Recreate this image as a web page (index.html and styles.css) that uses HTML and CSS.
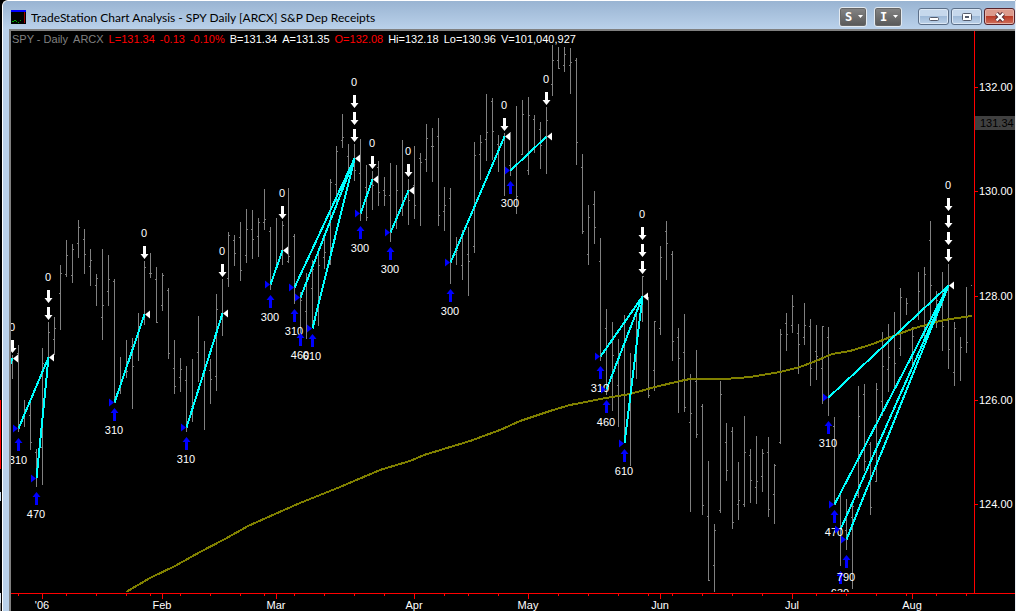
FILE: index.html
```html
<!DOCTYPE html>
<html lang="en">
<head>
<meta charset="utf-8">
<title>TradeStation Chart Analysis</title>
<link rel="stylesheet" href="styles.css">
</head>
<body>
<div class="edge" aria-hidden="true"></div>
<main class="window">
  <header class="titlebar">
    <svg class="app-icon" width="15" height="14" viewBox="0 0 15 14" aria-hidden="true">
      <rect width="15" height="14" fill="#000"/>
      <rect width="15" height="2" fill="#00f"/>
      <rect x="13" y="2" width="1" height="11" fill="#a00000"/>
      <path d="M1 11.500h2M3 10.500h2M5 11.500h1M7 12.500h1M9 10.500h1" stroke="#0a0" fill="none"/>
    </svg>
    <h1 class="title">TradeStation Chart Analysis - SPY Daily [ARCX] S&amp;P Dep Receipts</h1>
    <div class="tools">
      <button class="tool" type="button" aria-label="Symbol menu">S<svg width="7" height="4" viewBox="0 0 7 4"><path d="M1 0h5L3.500 3z" fill="#fff"/></svg></button>
      <button class="tool" type="button" aria-label="Interval menu">I<svg width="7" height="4" viewBox="0 0 7 4"><path d="M1 0h5L3.500 3z" fill="#fff"/></svg></button>
    </div>
    <div class="controls">
      <button class="control" type="button" aria-label="Minimize"><svg width="12" height="10" viewBox="0 0 12 10"><rect x="1.500" y="5.500" width="9" height="3" rx="1" fill="#fff" stroke="#555b6b"/></svg></button>
      <button class="control" type="button" aria-label="Maximize"><svg width="12" height="10" viewBox="0 0 12 10"><rect x="1.500" y="1.500" width="9" height="7" rx="1" fill="#fff" stroke="#555b6b"/><rect x="4.500" y="4.500" width="3" height="1" fill="#a9c3df" stroke="#555b6b"/></svg></button>
      <button class="control close" type="button" aria-label="Close"><svg width="12" height="10" viewBox="0 0 12 10"><path d="M2.500 1.500L9.500 8.500M9.500 1.500L2.500 8.500" stroke="#59323a" stroke-width="4.400"/><path d="M2.500 1.500L9.500 8.500M9.500 1.500L2.500 8.500" stroke="#fff" stroke-width="2.400"/></svg></button>
    </div>
  </header>
  <section class="chart">
    <div class="quote">
      <span class="dim">SPY - Daily</span><span class="dim">ARCX</span>
      <span class="down">L=131.34</span><span class="down">-0.13</span><span class="down">-0.10%</span>
      <span>B=131.34</span><span>A=131.35</span><span class="down">O=132.08</span>
      <span>Hi=132.18</span><span>Lo=130.96</span><span>V=101,040,927</span>
    </div>
    <svg class="plot" viewBox="11 45 1004 566" preserveAspectRatio="xMinYMin meet" role="img" aria-label="SPY daily price bars with trades">
      <defs><clipPath id="pane"><rect x="11" y="45" width="963" height="547"/></clipPath></defs>
      <g clip-path="url(#pane)">
        <path id="bars" class="bars"/>
        <polyline class="average" points="126,592 150,578 175,566 200,552 225,539 248,526 275,514 300,503 340,487 380,470 410,461 424,455 470,441 500,430 520,421 550,411 570,405 606,398 630,394 655,387 680,381 690,379 725,379 750,377 780,372 800,367 816,361 832,354 850,351 870,345 893,336 915,328 940,321 950,319 972,316"/>
        <g id="trades"></g>
      </g>
      <path id="axis" class="axis"/>
      <g id="scale"></g>
    </svg>
  </section>
</main>
<script src="chart.js"></script>
</body>
</html>
```

FILE: styles.css
```css
* { box-sizing: border-box; }

body {
  display: flex;
  min-height: 100vh;
  margin: 0;
  background: #000;
  font-family: "Liberation Sans", Arial, sans-serif;
  font-size: 11px;
  color: #fff;
}

.edge {
  width: 2px;
  background: linear-gradient(#000 400px, #f00 400px 469px, #000 469px 492px, #c8dcf0 492px 501px, #000 501px 593px, #dde6f0 593px 603px, #888 603px);
  clip-path: inset(0 1px 0 0);
}

.window {
  display: flex;
  flex: 1;
  flex-direction: column;
  min-width: 0;
  border-top: 1px solid #fff;
  border-left: 1px solid #fff;
  border-right: 1px solid #e8eef6;
  border-top-left-radius: 6px;
  background: #bad1ea;
}

.titlebar {
  display: flex;
  align-items: center;
  height: 28px;
  padding: 3px 0 0 8px;
  border-top-left-radius: 5px;
  background: linear-gradient(#99b4d2, #bad1ea);
}

.app-icon { margin-right: 5px; }

.title {
  flex: 1;
  margin: 0;
  padding-top: 2px;
  overflow: hidden;
  font-family: Lato, "Noto Sans", sans-serif;
  font-size: 12px;
  font-weight: 400;
  line-height: 16px;
  white-space: nowrap;
  color: #000;
}

.tools { display: flex; gap: 7px; margin-right: 16px; }

.tool {
  display: flex;
  align-items: center;
  justify-content: space-between;
  width: 28px;
  height: 20px;
  padding: 0 2px 0 5px;
  border: 1px solid #e4eaf0;
  border-radius: 3px;
  background: linear-gradient(#858585, #585858);
  box-shadow: inset 0 0 0 1px #666;
  font-family: "DejaVu Sans Mono", monospace;
  font-size: 12px;
  font-weight: 700;
  color: #fff;
}

.controls { display: flex; gap: 2px; }

.control {
  display: flex;
  align-items: center;
  justify-content: center;
  width: 31px;
  height: 17px;
  padding: 0;
  border: 1px solid #5c6f88;
  border-radius: 3px;
  background: linear-gradient(#c6d8ec 45%, #9fbad8 50%, #bdd2e9);
  box-shadow: inset 0 0 0 1px #dce8f5;
}

.close {
  border-color: #57222a;
  background: linear-gradient(#dc9a8c 45%, #b93b27 50%, #d0705c);
  box-shadow: inset 0 0 0 1px #e6b3a8;
}

.chart {
  display: flex;
  flex: 1;
  flex-direction: column;
  margin-left: 6px;
  border-top: 2px solid #808080;
  border-left: 2px solid #808080;
  background: #000;
}

.quote {
  display: flex;
  gap: 5px;
  height: 14px;
  padding: 1px 0 0 1px;
  line-height: 14px;
  white-space: nowrap;
}

.dim { color: #808080; }
.down { color: #f00; }

.plot { display: block; width: 100%; overflow: visible; }

.plot text { font-size: 11px; fill: #fff; }
.plot .centered { text-anchor: middle; }
.plot .last-price { fill: #000; }
.last-box { fill: #404040; }

.bars { fill: none; stroke: #808080; shape-rendering: crispEdges; }
.average { fill: none; stroke: #808000; stroke-width: 2; shape-rendering: crispEdges; }
.link { stroke: #0ff; stroke-width: 2; shape-rendering: crispEdges; }
.entry { fill: #00f; }
.exit { fill: #fff; }
.axis { fill: none; stroke: #f00; shape-rendering: crispEdges; }
```

FILE: chart.js
```js
// One row per session, 6 units apart: high, low, open, close (0 = no tick).
const START = 12, STEP = 6;
const sessions = [
  [355,379,0,0],[345,432,353,0],[400,427,0,0],[400,450,415,442],[449,487,452,0],[348,485,447,363],
  [322,357,0,332],[317,355,339,328],[265,330,293,273],[240,277,274,255],[244,283,275,249],[220,258,243,227],
  [229,274,239,254],[249,286,266,260],[274,306,285,278],[249,340,317,305],[255,306,291,279],[279,403,281,0],
  [357,394,0,0],[340,378,0,371],[338,409,346,366],[313,361,0,0],[261,325,0,267],[253,278,273,273],
  [267,323,279,322],[273,311,305,275],[288,359,290,353],[340,394,368,386],[358,392,377,369],[366,432,380,0],
  [359,422,406,0],[316,382,352,0],[341,430,0,0],[359,404,370,379],[294,391,376,309],[279,336,0,0],
  [232,287,278,235],[235,266,240,253],[222,281,237,270],[209,263,255,229],[210,259,229,239],[218,257,236,222],
  [189,230,222,219],[227,290,231,0],[218,268,0,264],[221,265,0,225],[188,263,261,256],[234,304,236,0],
  [292,340,0,300],[273,339,311,0],[260,328,288,269],[250,326,0,265],[237,269,257,252],[179,265,264,182],
  [146,207,184,151],[114,148,140,137],[144,170,156,0],[144,181,0,170],[139,221,173,0],[165,221,187,217],
  [171,210,0,185],[161,206,167,192],[177,206,190,195],[163,242,195,0],[165,229,0,190],[140,216,0,205],
  [179,225,0,200],[146,219,185,205],[153,226,158,162],[124,172,159,138],[128,182,146,146],[118,226,136,215],
  [187,231,211,205],[188,284,198,0],[237,265,254,250],[230,280,265,0],[227,296,254,261],[142,253,246,155],
  [135,180,154,142],[94,161,139,132],[98,160,101,131],[135,172,144,0],[133,196,0,0],[132,176,165,0],
  [106,214,0,196],[100,155,154,114],[97,175,170,115],[115,153,119,0],[122,169,129,145],[107,174,0,120],
  [45,96,84,60],[47,69,60,68],[47,72,65,54],[48,94,65,62],[58,165,60,142],[154,234,167,231],
  [205,265,254,217],[191,244,204,227],[238,361,261,0],[309,395,328,0],[322,411,0,355],[339,427,385,0],
  [315,443,0,338],[353,466,0,0],[310,379,0,0],[276,322,0,276],[297,398,0,395],[321,391,370,321],
  [246,335,328,257],[221,280,231,243],[251,361,254,341],[328,413,337,358],[314,412,352,407],[374,512,422,413],
  [350,438,381,434],[404,515,406,505],[461,581,516,580],[524,592,565,530],[381,513,510,394],[423,481,442,470],
  [427,529,431,522],[462,520,504,500],[416,507,504,452],[449,503,455,480],[436,504,487,481],[449,492,476,453],
  [437,517,452,509],[464,524,494,465],[329,444,442,334],[313,351,323,334],[295,333,325,306],[324,374,333,344],
  [303,345,337,325],[319,386,326,368],[325,380,351,356],[326,404,368,326],[327,416,337,0],[417,505,426,0],
  [493,566,0,0],[499,550,530,0],[500,589,517,506],[386,498,495,416],[384,471,394,461],[442,515,444,507],
  [383,482,481,389],[332,416,401,366],[324,392,369,357],[312,388,0,363],[288,356,348,297],[298,315,0,303],
  [327,367,0,336],[272,320,0,291],[267,338,0,274],[221,325,240,285],[291,328,0,300],[272,351,0,326],
  [264,369,0,349],[322,386,372,328],[337,381,0,347],[287,353,0,342],[285,285,285,0]
];

// x, fill price position, top of the arrow, running position size
const entries = [
  [18,428,438,310],[36,478,492,470],[114,402,408,310],[186,427,437,310],[270,284,295,300],
  [294,287,309,310],[300,297,333,460],[312,328,334,610],[360,213,226,300],[390,232,247,300],
  [450,262,289,300],[510,170,181,300],[600,356,366,310],[606,389,400,460],[624,443,449,610],
  [828,397,421,310],[834,504,510,470],[840,529,571,630],[846,539,555,790]
];

// x, fill price position, top of the first arrow, arrows, entries closed
const exits = [
  [12,358,340,1,[]],[48,357,290,2,[18,36]],[144,314,246,1,[114]],[222,313,264,1,[186]],[282,250,206,1,[270]],
  [354,158,95,3,[294,300,312]],[372,179,156,1,[360]],[408,190,164,1,[390]],[504,136,118,1,[450]],
  [546,136,92,1,[510]],[642,296,227,3,[600,606,624]],[948,285,198,4,[828,834,840,846]]
];

const months = [[42,"'06"],[162,"Feb"],[276,"Mar"],[414,"Apr"],[528,"May"],[660,"Jun"],[792,"Jul"],[912,"Aug"]];
const weeks = [18,66,96,126,150,180,210,240,264,294,324,354,384,444,468,498,558,588,618,648,672,702,732,762,816,846,876,906,936,966];
const prices = [[87,"132.00"],[191,"130.00"],[296,"128.00"],[400,"126.00"],[504,"124.00"]];

const byId = id => document.getElementById(id);

function add(parent, tag, attrs, text) {
  const node = document.createElementNS("http://www.w3.org/2000/svg", tag);
  for (const key in attrs) node.setAttribute(key, attrs[key]);
  if (text !== undefined) node.textContent = text;
  parent.appendChild(node);
}

byId("bars").setAttribute("d", sessions.map(([high, low, open, close], i) => {
  const x = START + i * STEP;
  return `M${x + 0.5} ${high}V${low}`
    + (open ? `M${x - 1} ${open + 0.5}h1` : "")
    + (close ? `M${x + 1} ${close + 0.5}h1` : "");
}).join(""));

const trades = byId("trades");
add(trades, "path", { class: "link", d: "M12.5 358L10 366", fill: "none" });
for (const [x, y, top, count, closed] of exits) {
  for (const [ex, ey] of entries.filter(e => closed.includes(e[0]))) {
    add(trades, "line", { class: "link", x1: ex + 0.5, y1: ey + 0.5, x2: x + 0.5, y2: y + 0.5 });
  }
  add(trades, "path", { class: "exit", d: `M${x + 1} ${y + 0.5}l5 -4v8z` });
  for (let i = 0; i < count; i++) {
    add(trades, "path", { class: "exit", d: `M${x - 1} ${top + i * 17}h3v8h2.500l-4 5l-4 -5h2.500z` });
  }
  add(trades, "text", { class: "centered", x: x, y: top - 9 }, "0");
}
for (const [x, y, top, size] of entries) {
  add(trades, "path", { class: "entry", d: `M${x} ${y + 0.5}l-5 -4v8z` });
  add(trades, "path", { class: "entry", d: `M${x - 1} ${top + 13}h3v-8h2.500l-4 -5l-4 5h2.500z` });
  add(trades, "text", { class: "centered", x: x, y: top + 26 }, size);
}

byId("axis").setAttribute("d", "M974.5 31V593M11 593.5H1015"
  + months.map(([x]) => `M${x + 0.5} 594v5`).join("")
  + weeks.map(x => `M${x + 0.5} 594v2`).join("")
  + prices.map(([y]) => `M975 ${y + 0.5}h3`).join(""));

const scale = byId("scale");
for (const [x, name] of months) add(scale, "text", { class: "centered", x: x, y: 609 }, name);
for (const [y, price] of prices) add(scale, "text", { x: 979, y: y + 4 }, price);
add(scale, "rect", { class: "last-box", x: 975, y: 116, width: 40, height: 14 });
add(scale, "text", { class: "last-price", x: 980, y: 127 }, "131.34");
```
